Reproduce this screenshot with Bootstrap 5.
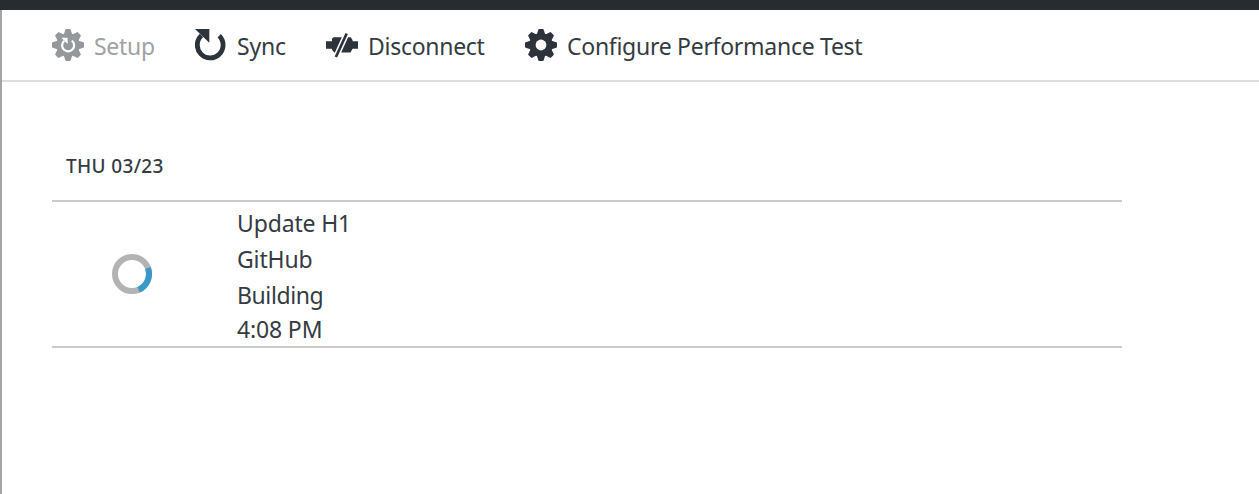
<!DOCTYPE html>
<html lang="en">
<head>
<meta charset="utf-8">
<title>Deployments</title>
<link href="https://cdn.jsdelivr.net/npm/bootstrap@5.3.0/dist/css/bootstrap.min.css" rel="stylesheet">
<style>
body{font-family:"Noto Sans","Open Sans",sans-serif;font-size:23px;color:#343b42;background:#fff;height:494px;overflow:hidden}
.topbar{height:10px;background:#272c31}
.blade{border-left:2px solid #a5a5a5;height:484px}
.commands{height:72px;border-bottom:2px solid #dedede;padding-left:50px}
.command{gap:10px;color:#343b42;font-size:23px;line-height:32px;letter-spacing:-.28px;white-space:nowrap;border:0;background:none}
.command svg{width:32px;height:32px;flex:none}
.command span{padding-top:2px;line-height:30px}
.command.off{color:#a0a2a5}
.w-setup{width:143px}.w-sync{width:131px;letter-spacing:-.15px}.w-disc{width:199px}
.log{margin-left:50px;width:1070px;padding-top:70px}
.day{font-size:19px;line-height:28px;font-weight:500;letter-spacing:.35px;padding-left:14px;height:48px}
.entry{border-top:2px solid #cacaca;border-bottom:2px solid #cacaca;height:148px}
.state{width:185px;padding-left:60px}
.details{line-height:36px;padding-top:3px;letter-spacing:-.15px}
.details .status{letter-spacing:-.4px}
.details .time{line-height:32px}
</style>
<script src="https://cdn.jsdelivr.net/npm/bootstrap@5.3.0/dist/js/bootstrap.bundle.min.js"></script>
</head>
<body>
<svg width="0" height="0" class="d-none">
<defs>
<path id="tooth" d="M-4.2-10.6 L-2.7-15.3 Q-2.5-16 -1.8-16 H1.8 Q2.5-16 2.7-15.3 L4.2-10.6 V-5 H-4.2Z"/>
<g id="teeth"><use href="#tooth"/><use href="#tooth" transform="rotate(45)"/><use href="#tooth" transform="rotate(90)"/><use href="#tooth" transform="rotate(135)"/><use href="#tooth" transform="rotate(180)"/><use href="#tooth" transform="rotate(225)"/><use href="#tooth" transform="rotate(270)"/><use href="#tooth" transform="rotate(315)"/></g>
</defs>
</svg>
<div class="topbar"></div>
<main class="blade">
<nav class="commands d-flex align-items-center">
<button class="command off w-setup d-flex align-items-center p-0" disabled>
<svg viewBox="-16 -16 32 32" fill="#95989b"><use href="#teeth"/><circle r="11.7"/><path d="M3.8-4.4A6 6 0 1 1-3.8-4.2" fill="none" stroke="#fff" stroke-width="2.2"/><path d="M-6.6-7.2H-.4V-1Z" fill="#fff"/></svg><span>Setup</span></button>
<button class="command w-sync d-flex align-items-center p-0">
<svg viewBox="0 0 32 32"><path d="M24.2 6.8A12.9 12.9 0 1 1 6.5 6.5" fill="none" stroke="#2c333a" stroke-width="4.8"/><path d="M0 0H14.3V13.8Z" fill="#2c333a"/></svg><span>Sync</span></button>
<button class="command w-disc d-flex align-items-center p-0">
<svg viewBox="0 0 32 32" fill="#2c333a"><path d="M0 12.3H6V9.7L7.4 8.2H15.8L8.9 23.4H8.2L6 20.8V19.7H0Z"/><path d="M22.1 8.2H24.8L26.6 11.2V12.3H32V19.7H26.6L24.5 23.4H15.2Z"/><path d="M19.5 4L21.9 5L11.1 28.5L8.7 27.5Z"/></svg><span>Disconnect</span></button>
<button class="command d-flex align-items-center p-0">
<svg viewBox="-16 -16 32 32" fill="#2c333a"><use href="#teeth"/><circle r="11.7"/><circle r="5.4" fill="#fff"/></svg><span>Configure Performance Test</span></button>
</nav>
<section class="log">
<div class="day">THU 03/23</div>
<div class="entry d-flex">
<div class="state d-flex align-items-center">
<svg width="40" height="40" viewBox="-20 -20 40 40" fill="none" stroke-width="6"><circle r="17" stroke="#b3b3b3"/><path d="M15.9-6A17 17 0 0 1 6.6 15.7" stroke="#3999c6"/></svg>
</div>
<div class="details">
<div>Update H1</div><div>GitHub</div><div class="status">Building</div><div class="time">4:08 PM</div>
</div>
</div>
</section>
</main>
</body>
</html>
